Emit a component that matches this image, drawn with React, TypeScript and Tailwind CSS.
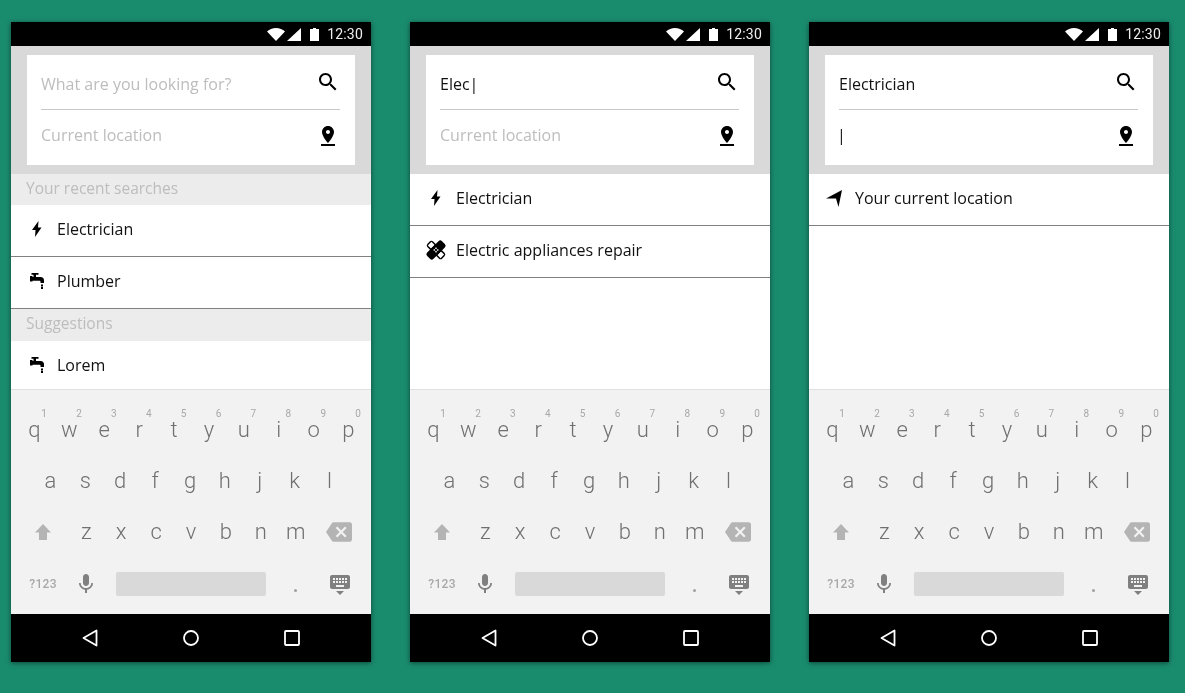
const sans = "font-['Open_Sans','Noto_Sans',sans-serif]";

type Row = { icon: "bolt" | "tap" | "bandage" | "nav"; label: string };

const topRow = ["q", "w", "e", "r", "t", "y", "u", "i", "o", "p"];
const homeRow = ["a", "s", "d", "f", "g", "h", "j", "k", "l"];
const bottomRow = ["z", "x", "c", "v", "b", "n", "m"];

function Bolt() {
  return (
    <svg width="10" height="16" viewBox="0 0 10 16" fill="#000">
      <path d="M6.500 0 0 9h3.500L3 16l6.500-9.500H6z" />
    </svg>
  );
}

function Tap() {
  return (
    <svg width="14" height="16" viewBox="0 0 14 16" fill="#000">
      <path d="M1.500 0h7v1.800H6V4h4.500A3.500 3.500 0 0 1 14 7.500V10h-3.500V8.500a.8.8 0 0 0-.8-.8H2.500v.8H0V3h2.500V4H3.500V1.800h-2z" />
      <rect x="11" y="11.500" width="2" height="1.500" />
      <rect x="11" y="13.500" width="2" height="2.500" />
    </svg>
  );
}

function Bandage() {
  return (
    <svg width="22" height="22" viewBox="0 0 22 22">
      <g transform="rotate(-45 11 11)">
        <rect x="7" y="0.500" width="8" height="21" rx="2.500" fill="#000" />
        <rect x="8.500" y="2" width="5" height="4.500" fill="#fff" />
        <rect x="8.500" y="15.500" width="5" height="4.500" fill="#fff" />
        <rect x="0.500" y="6.500" width="21" height="9" rx="2.500" fill="#000" />
        <rect x="9" y="9" width="1.500" height="1.500" fill="#fff" />
        <rect x="11.500" y="9" width="1.500" height="1.500" fill="#fff" />
        <rect x="9" y="11.500" width="1.500" height="1.500" fill="#fff" />
        <rect x="11.500" y="11.500" width="1.500" height="1.500" fill="#fff" />
      </g>
    </svg>
  );
}

function NavArrow() {
  return (
    <svg width="17" height="17" viewBox="0 0 17 17" fill="#000">
      <path d="M0 8.500 16 0l-3.500 17-2.500-8.500z" />
    </svg>
  );
}

function RowIcon({ icon }: { icon: Row["icon"] }) {
  if (icon === "bolt") return <Bolt />;
  if (icon === "tap") return <Tap />;
  if (icon === "bandage") return <Bandage />;
  return <NavArrow />;
}

function StatusBar() {
  return (
    <div className="flex h-6 items-center justify-end bg-black pr-2">
      <svg width="18" height="13" viewBox="0 0 18 13" fill="#fff">
        <path d="M0 3.500C2.500 1.300 5.500 0 9 0s6.500 1.300 9 3.500L9 13z" />
      </svg>
      <svg className="ml-[2px]" width="14" height="13" viewBox="0 0 14 13" fill="#fff">
        <path d="M0 13 14 0v13z" />
      </svg>
      <svg className="ml-[9px]" width="9" height="13" viewBox="0 0 9 13" fill="#fff">
        <path d="M3 0h3v1h3v12H0V1h3z" />
      </svg>
      <span className="ml-2 font-['Roboto',sans-serif] text-[14px] leading-none tracking-[0.2px] text-[#eeeeee]">
        12:30
      </span>
    </div>
  );
}

function SearchCard({ what, where }: { what: React.ReactNode; where: React.ReactNode }) {
  return (
    <div className="bg-[#d9d9d9] px-4 py-[9px]">
      <div className="flex h-[110px] flex-col bg-white pl-[14px] pr-[15px]">
        <div className="flex h-[55px] items-center justify-between border-b border-[#c8c8c8]">
          <div className="pt-[3px] text-[16px]">{what}</div>
          <svg width="24" height="24" viewBox="0 0 24 24" fill="#000">
            <path d="M15.500 14h-.79l-.28-.27C15.410 12.590 16 11.110 16 9.500 16 5.910 13.090 3 9.500 3S3 5.910 3 9.500 5.910 16 9.500 16c1.610 0 3.090-.59 4.230-1.570l.27.28v.79l5 4.990L20.490 19l-4.990-5zm-6 0C7.010 14 5 11.990 5 9.500S7.010 5 9.500 5 14 7.010 14 9.500 11.990 14 9.500 14z" />
          </svg>
        </div>
        <div className="flex flex-1 items-center justify-between pb-[4px]">
          <div className="pb-[2px] text-[16px]">{where}</div>
          <svg width="24" height="24" viewBox="0 0 24 24" fill="#000">
            <path d="M18 8c0-3.310-2.690-6-6-6S6 4.690 6 8c0 4.500 6 11 6 11s6-6.500 6-11zm-8 0c0-1.100.9-2 2-2s2 .9 2 2-.89 2-2 2c-1.100 0-2-.9-2-2zM5 20v2h14v-2H5z" />
          </svg>
        </div>
      </div>
    </div>
  );
}

function SectionHeader({ label, h }: { label: string; h: string }) {
  return (
    <div className={`flex items-center bg-[#ececec] pb-[2px] pl-[15px] text-[15.5px] text-[#bdbdbd] ${h}`}>
      {label}
    </div>
  );
}

function ResultRow({ row, last }: { row: Row; last?: boolean }) {
  return (
    <div
      className={`flex items-center ${last ? "h-[48px]" : "h-[52px] border-b border-[#808080] pb-[3px]"}`}
    >
      <div className="flex w-[46px] justify-center pl-[5px]">
        <RowIcon icon={row.icon} />
      </div>
      <span className="text-[16px] text-[#111111]">{row.label}</span>
    </div>
  );
}

function LetterKey({ ch, hint }: { ch: string; hint?: string }) {
  return (
    <div className="relative flex h-full w-[34.9px] flex-none items-center justify-center text-[22px] font-light text-[#707070]">
      {hint ? (
        <span className="absolute right-[5px] top-[5px] text-[10px] font-normal leading-none text-[#a8a8a8]">
          {hint}
        </span>
      ) : null}
      {ch}
    </div>
  );
}

function Keyboard() {
  return (
    <div className="flex h-[225px] flex-col border-t border-[#e0e0e0] bg-[#f2f2f2] px-[6px] pt-[14px] font-['Roboto',sans-serif]">
      <div className="flex h-[51px]">
        {topRow.map((ch, i) => (
          <LetterKey key={ch} ch={ch} hint={String((i + 1) % 10)} />
        ))}
      </div>
      <div className="flex h-[51px] pl-[16px]">
        {homeRow.map((ch) => (
          <LetterKey key={ch} ch={ch} />
        ))}
      </div>
      <div className="flex h-[51px]">
        <div className="flex w-[52px] items-center justify-center">
          <svg width="18" height="18" viewBox="0 0 18 18" fill="#b4b4b4">
            <path d="M9 1 1 9.500h4V17h8V9.500h4z" />
          </svg>
        </div>
        {bottomRow.map((ch) => (
          <LetterKey key={ch} ch={ch} />
        ))}
        <div className="flex w-[52px] items-center justify-center">
          <svg width="26" height="26" viewBox="0 0 24 24" fill="#b4b4b4">
            <path d="M22 3H7c-.69 0-1.230.35-1.590.88L0 12l5.410 8.110c.36.53.9.89 1.590.89h15c1.100 0 2-.9 2-2V5c0-1.100-.9-2-2-2zm-3 12.590L17.590 17 14 13.410 10.410 17 9 15.590 12.590 12 9 8.410 10.410 7 14 10.590 17.590 7 19 8.410 15.410 12 19 15.590z" />
          </svg>
        </div>
      </div>
      <div className="mt-[1px] flex h-[51px] items-center">
        <div className="w-[52px] text-center text-[12px] font-medium tracking-[0.3px] text-[#a8a8a8]">?123</div>
        <div className="flex w-[34.9px] justify-center">
          <svg width="24" height="24" viewBox="0 0 24 24" fill="#808080">
            <path d="M12 14c1.660 0 2.990-1.340 2.990-3L15 5c0-1.660-1.340-3-3-3S9 3.340 9 5v6c0 1.660 1.340 3 3 3zm5.300-3c0 3-2.540 5.100-5.300 5.100S6.700 14 6.700 11H5c0 3.410 2.720 6.230 6 6.720V21h2v-3.280c3.280-.48 6-3.300 6-6.720h-1.700z" />
          </svg>
        </div>
        <div className="ml-[12px] h-6 w-[150px] rounded-[2px] bg-[#d9d9d9]" />
        <div className="flex h-6 w-[60px] items-end justify-center pb-[4px]">
          <div className="size-[3px] rounded-full bg-[#a0a0a0]" />
        </div>
        <div className="flex w-[28px] justify-center">
          <svg width="24" height="24" viewBox="0 0 24 24" fill="#808080">
            <path d="M20 3H4c-1.100 0-1.990.9-1.990 2L2 15c0 1.100.9 2 2 2h16c1.100 0 2-.9 2-2V5c0-1.100-.9-2-2-2zm-9 3h2v2h-2V6zm0 3h2v2h-2V9zM8 6h2v2H8V6zm0 3h2v2H8V9zm-1 2H5V9h2v2zm0-3H5V6h2v2zm9 7H8v-2h8v2zm0-4h-2V9h2v2zm0-3h-2V6h2v2zm3 3h-2V9h2v2zm0-3h-2V6h2v2zm-7 15l4-4H8l4 4z" />
          </svg>
        </div>
      </div>
    </div>
  );
}

function NavBar() {
  return (
    <div className="flex h-12 items-center justify-center gap-[85px] bg-black">
      <svg width="16" height="18" viewBox="0 0 16 18" fill="none" stroke="#fff" strokeWidth="1.800" strokeLinejoin="round">
        <path d="M14.500 1.500v15L1.500 9z" />
      </svg>
      <svg width="16" height="16" viewBox="0 0 16 16" fill="none" stroke="#fff" strokeWidth="1.800">
        <circle cx="8" cy="8" r="7" />
      </svg>
      <svg width="16" height="16" viewBox="0 0 16 16" fill="none" stroke="#fff" strokeWidth="1.800">
        <rect x="1" y="1" width="14" height="14" rx="1" />
      </svg>
    </div>
  );
}

function Phone({ children }: { children: React.ReactNode }) {
  return (
    <div className={`flex h-[640px] w-[360px] flex-none flex-col bg-white shadow-[0_1px_5px_rgba(0,0,0,0.5)] will-change-transform ${sans}`}>
      <StatusBar />
      {children}
      <Keyboard />
      <NavBar />
    </div>
  );
}

const placeholder = (text: string) => <span className="text-[#bdbdbd]">{text}</span>;
const typed = (text: string) => <span className="text-[#111111]">{text}</span>;

export default function App() {
  return (
    <div className="flex h-[693px] w-[1185px] gap-[39px] overflow-hidden bg-[#1a8c6e] pl-[11px] pt-[22px]">
      <Phone>
        <SearchCard what={placeholder("What are you looking for?")} where={placeholder("Current location")} />
        <SectionHeader label="Your recent searches" h="h-[31px]" />
        <ResultRow row={{ icon: "bolt", label: "Electrician" }} />
        <ResultRow row={{ icon: "tap", label: "Plumber" }} />
        <SectionHeader label="Suggestions" h="h-[32px]" />
        <ResultRow row={{ icon: "tap", label: "Lorem" }} last />
      </Phone>
      <Phone>
        <SearchCard what={typed("Elec|")} where={placeholder("Current location")} />
        <div className="flex-1">
          <ResultRow row={{ icon: "bolt", label: "Electrician" }} />
          <ResultRow row={{ icon: "bandage", label: "Electric appliances repair" }} />
        </div>
      </Phone>
      <Phone>
        <SearchCard what={typed("Electrician")} where={<span className="-ml-[2px] text-[#111111]">|</span>} />
        <div className="flex-1">
          <ResultRow row={{ icon: "nav", label: "Your current location" }} />
        </div>
      </Phone>
    </div>
  );
}
